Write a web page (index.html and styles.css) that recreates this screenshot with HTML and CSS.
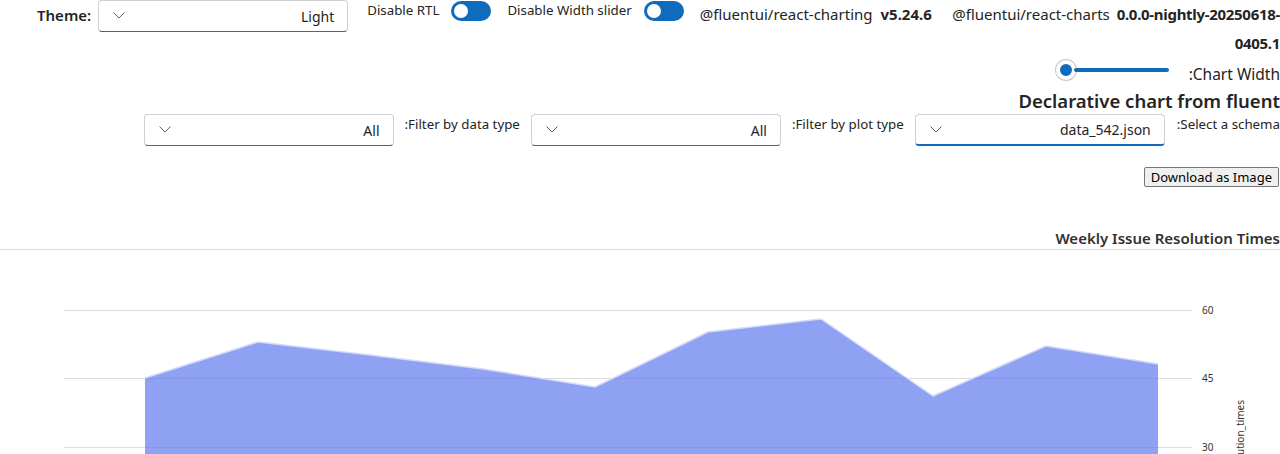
FILE: index.html
```html
<!DOCTYPE html>
<html lang="en">
<head>
<meta charset="utf-8">
<title>Declarative chart</title>
<link rel="stylesheet" href="styles.css">
</head>
<body>
<div class="page">
  <div class="top-row">
    <span class="theme-label">Theme:</span>
    <div class="dropdown dd-theme">
      <svg class="chev" width="12" height="7" viewBox="0 0 12 7"><path d="M0.5 0.5 L6 6 L11.5 0.5" fill="none" stroke="#616161" stroke-width="1"/></svg>
      <span class="dd-value">Light</span>
    </div>
    <span class="switch-label sl-rtl">Disable RTL</span>
    <span class="switch"><span class="knob"></span></span>
    <span class="switch-label sl-width">Disable Width slider</span>
    <span class="switch"><span class="knob"></span></span>
    <span class="pkg">@fluentui/react-charting</span>
    <span class="ver">v5.24.6</span>
    <span class="pkg-last"><span class="nw">@fluentui/react-charts <b class="ver-b">0.0.0-nightly-20250618-</b></span><br><b class="ver-b">0405.1</b></span>
  </div>

  <div class="slider-row">
    <div class="slider">
      <span class="thumb"></span>
      <span class="track"></span>
    </div>
    <span class="slider-label">:Chart Width</span>
  </div>

  <div class="heading">Declarative chart from fluent</div>

  <div class="filter-row">
    <div class="dropdown">
      <svg class="chev" width="12" height="7" viewBox="0 0 12 7"><path d="M0.5 0.5 L6 6 L11.5 0.5" fill="none" stroke="#616161" stroke-width="1"/></svg>
      <span class="dd-value">All</span>
    </div>
    <span class="filter-label">:Filter by data type</span>
    <div class="dropdown">
      <svg class="chev" width="12" height="7" viewBox="0 0 12 7"><path d="M0.5 0.5 L6 6 L11.5 0.5" fill="none" stroke="#616161" stroke-width="1"/></svg>
      <span class="dd-value">All</span>
    </div>
    <span class="filter-label">:Filter by plot type</span>
    <div class="dropdown focused">
      <svg class="chev" width="12" height="7" viewBox="0 0 12 7"><path d="M0.5 0.5 L6 6 L11.5 0.5" fill="none" stroke="#616161" stroke-width="1"/></svg>
      <span class="dd-value">data_542.json</span>
    </div>
    <span class="filter-label last">:Select a schema</span>
  </div>

  <div class="button-row">
    <button class="dl-btn">Download as Image</button>
  </div>

  <div class="chart-title">Weekly Issue Resolution Times</div>

  <div class="chart">
    <svg width="1280" height="206" viewBox="0 0 1280 206">
      <g class="grid">
        <line x1="64" y1="60.5" x2="1192" y2="60.5"/>
        <line x1="64" y1="128.5" x2="1192" y2="128.5"/>
        <line x1="64" y1="197.5" x2="1192" y2="197.5"/>
      </g>
      <polygon class="area" points="145,128 258,92 370,105 483,119 595,137 708,82 821,69 933,146 1046,96 1158,114 1158,210 145,210"/>
      <polyline class="edge" points="145,128 258,92 370,105 483,119 595,137 708,82 821,69 933,146 1046,96 1158,114"/>
      <g class="ticks">
        <text x="1202" y="64">60</text>
        <text x="1202" y="132">45</text>
        <text x="1202" y="201">30</text>
      </g>
      <text class="axis-title" transform="translate(1244,150) rotate(-90)" text-anchor="end">weekly_resolution_times</text>
    </svg>
  </div>
</div>
</body>
</html>
```

FILE: styles.css
```css
* { box-sizing: border-box; }
html, body { margin: 0; padding: 0; background: #ffffff; }
body {
  font-family: "Noto Sans", "Open Sans", sans-serif;
  color: #242424;
  overflow: hidden;
}
.page { width: 1280px; }

.top-row {
  display: flex;
  align-items: flex-start;
  padding-left: 37px;
  height: 58px;
}
.theme-label {
  font-size: 15px;
  font-weight: 600;
  line-height: 30px;
  margin-right: 7px;
}
.dropdown {
  position: relative;
  width: 250px;
  height: 32px;
  border: 1px solid #d1d1d1;
  border-bottom-color: #616161;
  border-radius: 4px;
  display: flex;
  align-items: center;
  justify-content: space-between;
  padding: 0 13px 0 14px;
  background: #fff;
  flex: none;
}
.dropdown.focused { border-bottom: 2px solid #0f6cbd; }
.chev { flex: none; margin-top: -1px; }
.dd-value { font-size: 14px; color: #242424; }
.switch-label {
  font-size: 13.3px;
  line-height: 20px;
  margin-left: 19px;
  margin-right: 12px;
}
.sl-width { margin-left: 16px; }
.switch {
  width: 40px;
  height: 20px;
  border-radius: 10px;
  background: #0f6cbd;
  display: flex;
  align-items: center;
  padding-left: 3px;
  margin-top: 1px;
  flex: none;
}
.knob {
  width: 14px;
  height: 14px;
  border-radius: 50%;
  background: #fff;
}
.pkg {
  font-size: 15px;
  line-height: 29px;
  margin-left: 16px;
  margin-right: 8px;
  white-space: nowrap;
}
.ver {
  font-size: 15px;
  line-height: 29px;
  font-weight: 700;
  margin-right: 9px;
}
.pkg-last {
  flex: 1;
  min-width: 0;
  font-size: 15px;
  line-height: 29px;
  text-align: right;
}
.nw { white-space: nowrap; }
.ver-b { font-weight: 700; letter-spacing: -0.3px; margin-left: 3px; }

.slider-row {
  display: flex;
  justify-content: flex-end;
  align-items: center;
  height: 30px;
}
.slider {
  width: 113px;
  height: 20px;
  display: flex;
  align-items: center;
  margin-right: 20px;
  margin-top: -6px;
}
.thumb {
  width: 20px;
  height: 20px;
  border-radius: 50%;
  background: #0f6cbd;
  border: 4px solid #fff;
  box-shadow: 0 0 0 1px #c7c7c7;
  flex: none;
}
.track {
  flex: 1;
  height: 4px;
  background: #0f6cbd;
  border-radius: 2px;
  margin-left: -2px;
}
.slider-label {
  font-size: 15.5px;
  line-height: 20px;
  margin-top: 2px;
}

.heading {
  text-align: right;
  font-size: 18.5px;
  font-weight: 600;
  line-height: 26px;
}

.filter-row {
  display: flex;
  justify-content: flex-end;
  align-items: flex-start;
  height: 53px;
}
.filter-label {
  font-size: 13.3px;
  line-height: 20px;
  margin: 0 11px;
}
.filter-label.last { margin-right: 0; margin-left: 12px; }

.button-row {
  display: flex;
  justify-content: flex-end;
  padding-right: 1px;
  height: 61px;
}
.dl-btn {
  font-family: "Noto Sans", "Open Sans", sans-serif;
  font-size: 13px;
  line-height: 17px;
  height: 20px;
  padding: 0 6px;
  background: #efefef;
  border: 1px solid #767676;
  border-radius: 2px;
  color: #000;
}

.chart-title {
  text-align: right;
  font-size: 15px;
  font-weight: 600;
  line-height: 20px;
  color: #323130;
  height: 22px;
  border-bottom: 1px solid #dddddd;
}
.chart svg { display: block; }
.grid line { stroke: #dcdcdc; stroke-width: 1; }
.area { fill: rgb(94, 121, 236); fill-opacity: 0.7; }
.edge { fill: none; stroke: #d4dafa; stroke-width: 1.5; stroke-linejoin: round; }
.ticks text { font-size: 10px; fill: #323130; font-family: "Noto Sans", sans-serif; }
.axis-title { font-size: 10px; fill: #323130; font-family: "Noto Sans", sans-serif; }
```
